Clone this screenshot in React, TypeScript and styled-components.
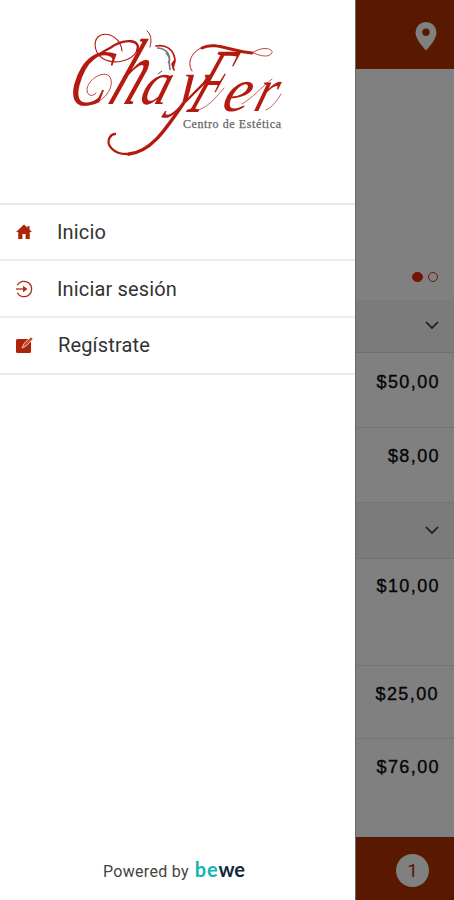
import React from "react";
import styled, { createGlobalStyle } from "styled-components";

const GlobalStyle = createGlobalStyle`
  *, *::before, *::after { box-sizing: border-box; }
  body { margin: 0; background: #fff; font-family: Roboto, "Liberation Sans", sans-serif; }
`;

const Screen = styled.div`
  display: grid;
  grid-template-columns: 355px 1fr;
  width: 454px;
  height: 900px;
  overflow: hidden;
`;

const Drawer = styled.aside`
  display: flex;
  flex-direction: column;
  background: #fff;
`;

const Brand = styled.header`
  height: 202.5px;
  svg { display: block; }
`;

const Menu = styled.nav`
  display: flex;
  flex-direction: column;
  border-top: 2px solid #e9e9e9;
`;

const MenuItem = styled.a`
  display: flex;
  align-items: center;
  height: 56.8px;
  padding-left: 15px;
  gap: 24px;
  border-bottom: 2px solid #ececec;
  color: #333;
  font-size: 20px;
  font-weight: 400;
  letter-spacing: 0.15px;
  svg { flex: none; }
`;

const Footer = styled.footer`
  display: flex;
  align-items: baseline;
  gap: 6px;
  margin-top: auto;
  height: 42px;
  padding-left: 103px;
  color: #444;
  font-size: 16px;
  letter-spacing: 0.3px;
`;

const Bewe = styled.span`
  color: #14243a;
  font-family: Lato, sans-serif;
  font-size: 20px;
  font-weight: 700;
  line-height: 22px;
  letter-spacing: 0.8px;
  b { color: #16b3b6; font-weight: 700; }
  span { letter-spacing: 0; }
`;

const Page = styled.main`
  display: flex;
  flex-direction: column;
  background: #808080;
  border-left: 1px solid #6b6868;
`;

const TopBar = styled.div`
  display: flex;
  align-items: center;
  justify-content: flex-end;
  height: 69px;
  padding: 3px 17px 0 0;
  background: #591900;
`;

const Banner = styled.div`
  display: flex;
  align-items: flex-end;
  justify-content: flex-end;
  gap: 5px;
  height: 231px;
  padding: 0 16px 18px 0;
`;

const Dot = styled.i<{ $on?: boolean }>`
  width: 10.5px;
  height: 10.5px;
  border: 1.5px solid #741605;
  border-radius: 50%;
  background: ${(p) => (p.$on ? "#741605" : "transparent")};
`;

const Section = styled.div<{ $h: number }>`
  display: flex;
  align-items: center;
  justify-content: flex-end;
  height: ${(p) => p.$h}px;
  padding: 0 15px 2px 0;
  background: #7b7b7b;
  border-bottom: 1px solid #707070;
`;

const Price = styled.div<{ $h: number; $top: number; $right?: number; $last?: boolean }>`
  height: ${(p) => p.$h}px;
  padding: ${(p) => p.$top}px ${(p) => p.$right ?? 14}px 0 0;
  border-bottom: ${(p) => (p.$last ? "0" : "1px solid #747474")};
  color: #050505;
  font-family: "Liberation Sans", Arial, sans-serif;
  font-size: 18px;
  -webkit-text-stroke: 0.35px #050505;
  line-height: 22px;
  letter-spacing: 1.4px;
  text-align: right;
`;

const BottomBar = styled.div`
  display: flex;
  align-items: center;
  justify-content: flex-end;
  height: 63px;
  margin-top: auto;
  padding: 4px 25px 0 0;
  background: #591900;
`;

const Count = styled.span`
  display: grid;
  place-items: center;
  width: 33px;
  height: 33px;
  border-radius: 50%;
  background: #808080;
  color: #591900;
  font-size: 19px;
`;

const ScriptLetter = styled.text`
  font-family: "Liberation Serif", serif;
  font-style: italic;
  font-size: 100px;
  fill: #b51a10;
`;

const letters: [string, string][] = [
  ["C", "translate(66 105) skewX(-14) scale(.56 .8)"],
  ["h", "translate(106 104) skewX(-24) scale(.58 .94)"],
  ["a", "translate(138 104) skewX(-18) scale(.56 .62)"],
  ["y", "translate(172 104) skewX(-24) scale(.6 .64)"],
  ["F", "translate(186 112) skewX(-25) scale(.44 .92)"],
  ["e", "translate(220 111) skewX(-18) scale(.6 .62)"],
  ["r", "translate(252 111) skewX(-18) scale(.52 .62)"],
];

const Logo = () => (
  <svg width="355" height="202" viewBox="0 0 355 202" role="img" aria-label="Chayfer Centro de Estética">
    {letters.map(([ch, t]) => (
      <ScriptLetter key={ch} transform={t}>{ch}</ScriptLetter>
    ))}
    <g fill="none" stroke="#b51a10" strokeLinecap="round" strokeLinejoin="round">
      <path strokeWidth="1.1" d="M122 51C121 39 110 32 101 35C92 39 94 52 102 58C113 65 131 62 137 51" />
      <path strokeWidth="2.4" d="M137 51C142 39 124 38 110 48Q98 54 88 63" />
      <path strokeWidth=".8" d="M80 105C101 108 116 88 110 77C104 69 87 80 87 90C87 96 93 97 96 93" />
      <path strokeWidth="1" d="M150 47C152 40 151 34 147 31" />
      <path strokeWidth="3.4" d="M183 104C165 130 151 152 129 154" />
      <path strokeWidth="2.4" d="M129 154C113 155 105 144 110 137Q112 134 115 134" />
      <path strokeWidth="1" d="M192 71C186 61 193 51 203 47" />
      <path strokeWidth="3" d="M202 48C214 41 233 52 252 53" />
      <path strokeWidth=".8" d="M252 53C262 46 273 48 272 53C269 58 260 56 254 53" />
      <path strokeWidth=".7" d="M190 111C204 112 214 100 224 88M242 104C251 99 262 87 272 79M266 110C273 107 278 99 281 94" />
      <path strokeWidth="1.7" d="M156 46C165 44 174 49 175 60L172 64L174 70M175 61L173 68" />
    </g>
    <path d="M157 48C165 48 171 54 169 61L170 70M166 53Q172 59 168 63" fill="none" stroke="#727979" strokeWidth="1.6" />
    <path d="M158 74L162 71" stroke="#555" />
    <text x="183" y="128" textLength="98" fill="#666" stroke="#666" strokeWidth=".25" fontFamily="Liberation Serif, serif" fontSize="12">Centro de Estética</text>
  </svg>
);

const HomeIcon = () => (
  <svg width="18" height="18" viewBox="0 0 18 18">
    <path d="M9 1.5L1 9h2.2v7h4.2v-5h3.2v5h4.2V9H17l-2.5-2.4V3h-2v1.7z" fill="#ad2408" />
  </svg>
);

const LoginIcon = () => (
  <svg width="18" height="18" viewBox="0 0 18 18" fill="none" stroke="#b02b18">
    <path d="M2.2 5.3A7.7 7.7 0 1 1 2.2 12.7" strokeWidth="1.3" />
    <path d="M1 9h8" strokeWidth="1.3" />
    <path d="M8 5.7L12.5 9L8 12.3z" fill="#b02b18" stroke="none" />
  </svg>
);

const RegisterIcon = () => (
  <svg width="19" height="18" viewBox="0 0 19 18">
    <rect x="1" y="3" width="15" height="14" rx="1.5" fill="#ad2408" />
    <path d="M7 12L9 7.5L16 1L18 3L11 10Z" fill="#c64b32" stroke="#f5d3c9" strokeWidth=".9" />
  </svg>
);

const Pin = () => (
  <svg width="22" height="29" viewBox="0 0 22 29">
    <path fillRule="evenodd" fill="#808080" d="M11 0A10.5 10.5 0 0 0 .5 10.5C.5 17 8 25 11 28.5C14 25 21.5 17 21.5 10.5A10.5 10.5 0 0 0 11 0ZM11 6.5a3.7 3.7 0 1 1 0 7.4a3.7 3.7 0 0 1 0-7.4Z" />
  </svg>
);

const Chevron = () => (
  <svg width="14" height="10" viewBox="0 0 14 10" fill="none" stroke="#1b1b1b" strokeWidth="1.7">
    <path d="M1 2l6 6 6-6" />
  </svg>
);

export default function App() {
  return (
    <>
      <GlobalStyle />
      <Screen>
        <Drawer>
          <Brand><Logo /></Brand>
          <Menu>
            <MenuItem><HomeIcon />Inicio</MenuItem>
            <MenuItem><LoginIcon />Iniciar sesión</MenuItem>
            <MenuItem><RegisterIcon />Regístrate</MenuItem>
          </Menu>
          <Footer>Powered by <Bewe><b>be</b><span>we</span></Bewe></Footer>
        </Drawer>
        <Page>
          <TopBar><Pin /></TopBar>
          <Banner><Dot $on /><Dot /></Banner>
          <Section $h={53}><Chevron /></Section>
          <Price $h={75} $top={18}>$50,00</Price>
          <Price $h={75} $top={17}>$8,00</Price>
          <Section $h={56}><Chevron /></Section>
          <Price $h={107} $top={16}>$10,00</Price>
          <Price $h={73} $top={17} $right={15}>$25,00</Price>
          <Price $h={90} $top={17} $last>$76,00</Price>
          <BottomBar><Count>1</Count></BottomBar>
        </Page>
      </Screen>
    </>
  );
}
